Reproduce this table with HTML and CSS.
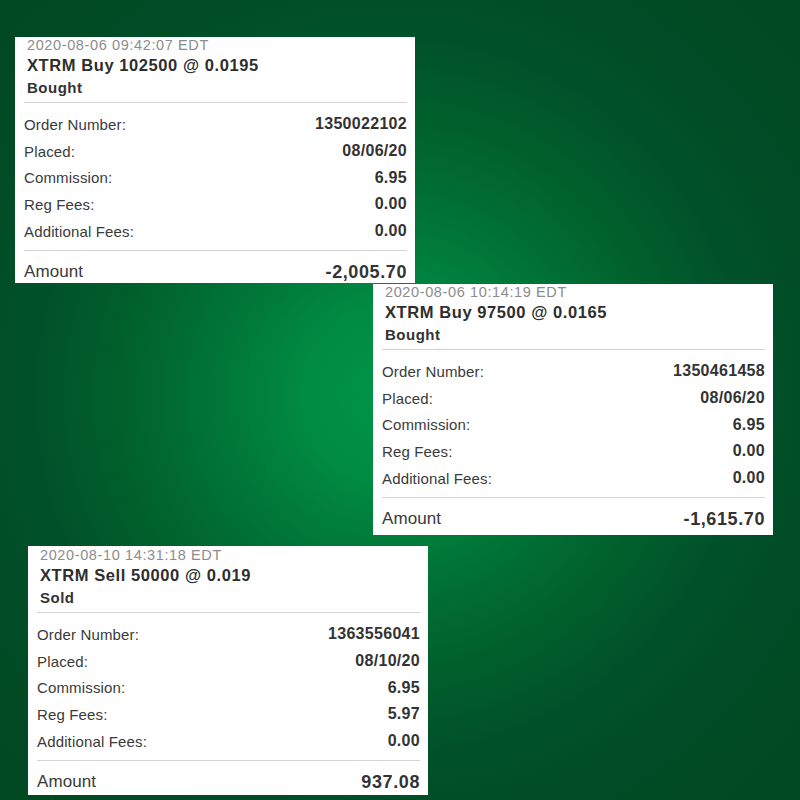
FILE: index.html
```html
<!DOCTYPE html>
<html>
<head>
<meta charset="utf-8">
<link rel="stylesheet" href="styles.css">
</head>
<body>
<main class="canvas">
  <section class="card card-first">
    <div class="stamp">2020-08-06 09:42:07 EDT</div>
    <div class="title">XTRM Buy 102500 @ 0.0195</div>
    <div class="status">Bought</div>
    <div class="rows">
      <div class="row"><span class="label">Order Number:</span><span class="value">1350022102</span></div>
      <div class="row"><span class="label">Placed:</span><span class="value">08/06/20</span></div>
      <div class="row"><span class="label">Commission:</span><span class="value">6.95</span></div>
      <div class="row"><span class="label">Reg Fees:</span><span class="value">0.00</span></div>
      <div class="row"><span class="label">Additional Fees:</span><span class="value">0.00</span></div>
    </div>
    <div class="total"><span class="total-label">Amount</span><span class="total-value">-2,005.70</span></div>
  </section>

  <section class="card card-second">
    <div class="stamp">2020-08-06 10:14:19 EDT</div>
    <div class="title">XTRM Buy 97500 @ 0.0165</div>
    <div class="status">Bought</div>
    <div class="rows">
      <div class="row"><span class="label">Order Number:</span><span class="value">1350461458</span></div>
      <div class="row"><span class="label">Placed:</span><span class="value">08/06/20</span></div>
      <div class="row"><span class="label">Commission:</span><span class="value">6.95</span></div>
      <div class="row"><span class="label">Reg Fees:</span><span class="value">0.00</span></div>
      <div class="row"><span class="label">Additional Fees:</span><span class="value">0.00</span></div>
    </div>
    <div class="total"><span class="total-label">Amount</span><span class="total-value">-1,615.70</span></div>
  </section>

  <section class="card card-third">
    <div class="stamp">2020-08-10 14:31:18 EDT</div>
    <div class="title">XTRM Sell 50000 @ 0.019</div>
    <div class="status">Sold</div>
    <div class="rows">
      <div class="row"><span class="label">Order Number:</span><span class="value">1363556041</span></div>
      <div class="row"><span class="label">Placed:</span><span class="value">08/10/20</span></div>
      <div class="row"><span class="label">Commission:</span><span class="value">6.95</span></div>
      <div class="row"><span class="label">Reg Fees:</span><span class="value">5.97</span></div>
      <div class="row"><span class="label">Additional Fees:</span><span class="value">0.00</span></div>
    </div>
    <div class="total"><span class="total-label">Amount</span><span class="total-value">937.08</span></div>
  </section>
</main>
</body>
</html>
```

FILE: styles.css
```css
html, body {
  margin: 0;
  padding: 0;
}

body {
  width: 800px;
  height: 800px;
  overflow: hidden;
  font-family: "Liberation Sans", Arial, sans-serif;
  color: #333333;
  background: radial-gradient(circle at 390px 395px, #009548 0px, #008a42 90px, #007436 180px, #005f2c 280px, #00512a 360px, #004a24 480px, #004822 620px);
}

.canvas {
  display: flex;
  flex-direction: column;
  align-items: flex-start;
}

.card {
  width: 400px;
  box-sizing: border-box;
  background: #ffffff;
  padding: 1px 8px 0 9px;
  display: flex;
  flex-direction: column;
  overflow: hidden;
}

.card-first {
  margin: 37px 0 0 15px;
  height: 246px;
}

.card-second {
  margin: 1px 0 0 373px;
  height: 251px;
}

.card-third {
  margin: 11px 0 0 28px;
  height: 249px;
  padding-top: 2px;
}

.stamp {
  padding-left: 3px;
  font-size: 14.5px;
  letter-spacing: 0.62px;
  line-height: 15px;
  color: #8c8c8c;
}

.title {
  padding-left: 3px;
  margin-top: 1px;
  font-size: 16.5px;
  font-weight: bold;
  letter-spacing: 0.58px;
  line-height: 23px;
  color: #2e2e2e;
}

.status {
  padding-left: 3px;
  font-size: 15px;
  font-weight: bold;
  letter-spacing: 0.5px;
  line-height: 22px;
  color: #333333;
  padding-bottom: 3px;
  border-bottom: 1px solid #d4d4d4;
}

.rows {
  display: flex;
  flex-direction: column;
  padding: 8px 0 6px 0;
  border-bottom: 1px solid #d4d4d4;
}

.row {
  display: flex;
  justify-content: space-between;
  align-items: center;
  height: 26.7px;
}

.label {
  font-size: 15px;
  letter-spacing: 0.15px;
  color: #3a3a3a;
}

.value {
  font-size: 16px;
  font-weight: bold;
  letter-spacing: 0.3px;
  color: #333333;
}

.total {
  display: flex;
  justify-content: space-between;
  align-items: center;
  padding-top: 6px;
  height: 30px;
  flex-shrink: 0;
}

.total-label {
  font-size: 17px;
  letter-spacing: 0.1px;
  color: #3a3a3a;
}

.total-value {
  font-size: 18px;
  font-weight: bold;
  letter-spacing: 0.6px;
  color: #333333;
}
```
